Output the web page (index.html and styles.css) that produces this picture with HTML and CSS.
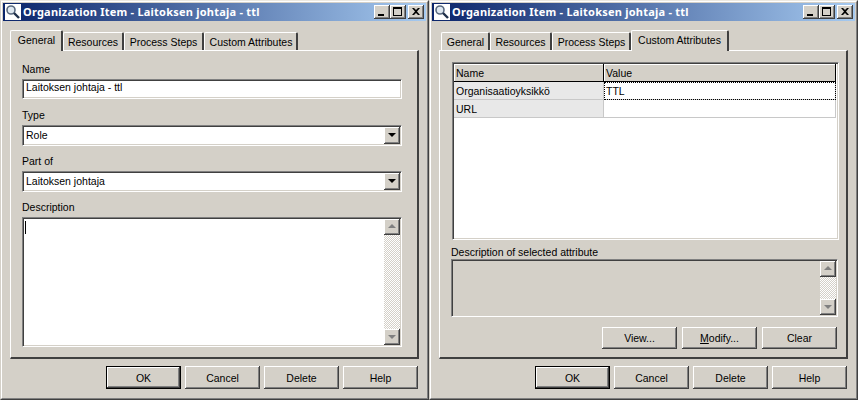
FILE: index.html
```html
<!DOCTYPE html>
<html lang="en">
<head>
<meta charset="utf-8">
<title>Organization Item</title>
<link rel="stylesheet" href="styles.css">
</head>
<body>
<svg class="defs" width="0" height="0" aria-hidden="true">
  <symbol id="mag" viewBox="0 0 16 16">
    <rect width="16" height="16" fill="#fff"/>
    <circle cx="6" cy="6" r="4" fill="#dfe8f0" stroke="#5a6a80" stroke-width="1.6"/>
    <path d="M9 9l5 5" stroke="#20304a" stroke-width="2.4"/>
  </symbol>
  <symbol id="min" viewBox="0 0 16 14"><path d="M4 9h6v2H4z" fill="#000"/></symbol>
  <symbol id="max" viewBox="0 0 16 14"><path d="M3 2h9v9H3zM4 4v6h7V4z" fill="#000" fill-rule="evenodd"/></symbol>
  <symbol id="close" viewBox="0 0 16 14"><path d="M4 3h2l2 2 2-2h2L9 6.5 12 10h-2L8 8l-2 2H4l3-3.500z" fill="#000"/></symbol>
  <symbol id="down" viewBox="0 0 16 16"><path d="M4 6h8L8 10z"/></symbol>
  <symbol id="up" viewBox="0 0 16 16"><path d="M4 9h8L8 5z"/></symbol>
</svg>

<section class="window">
  <div class="inner">
    <header class="title">
      <svg class="icon"><use href="#mag"/></svg>
      <span class="title-text">Organization Item - Laitoksen johtaja - ttl</span>
      <span class="controls">
        <button class="ctl"><svg><use href="#min"/></svg></button>
        <button class="ctl"><svg><use href="#max"/></svg></button>
        <button class="ctl close"><svg><use href="#close"/></svg></button>
      </span>
    </header>
    <nav class="tabs">
      <span class="tab active t1">General</span>
      <span class="tab t2">Resources</span>
      <span class="tab t3">Process Steps</span>
      <span class="tab t4">Custom Attributes</span>
    </nav>
    <main class="panel general">
      <label class="label">Name</label>
      <div class="field text">Laitoksen johtaja - ttl</div>
      <label class="label">Type</label>
      <div class="field select"><span>Role</span><span class="drop"><svg><use href="#down"/></svg></span></div>
      <label class="label">Part of</label>
      <div class="field select"><span>Laitoksen johtaja</span><span class="drop"><svg><use href="#down"/></svg></span></div>
      <label class="label">Description</label>
      <div class="field memo">
        <span class="caret"></span>
        <div class="scroll">
          <span class="sbtn"><svg><use href="#up"/></svg></span>
          <span class="track"></span>
          <span class="sbtn"><svg><use href="#down"/></svg></span>
        </div>
      </div>
    </main>
    <footer class="actions">
      <button class="btn default">OK</button>
      <button class="btn">Cancel</button>
      <button class="btn">Delete</button>
      <button class="btn">Help</button>
    </footer>
  </div>
</section>

<section class="window">
  <div class="inner">
    <header class="title">
      <svg class="icon"><use href="#mag"/></svg>
      <span class="title-text">Organization Item - Laitoksen johtaja - ttl</span>
      <span class="controls">
        <button class="ctl"><svg><use href="#min"/></svg></button>
        <button class="ctl"><svg><use href="#max"/></svg></button>
        <button class="ctl close"><svg><use href="#close"/></svg></button>
      </span>
    </header>
    <nav class="tabs tabs-right">
      <span class="tab r1">General</span>
      <span class="tab r2">Resources</span>
      <span class="tab r3">Process Steps</span>
      <span class="tab active r4">Custom Attributes</span>
    </nav>
    <main class="panel attrs">
      <div class="grid">
        <div class="grid-row head"><span class="gh c1">Name</span><span class="gh c2">Value</span></div>
        <div class="grid-row"><span class="cell c1 key">Organisaatioyksikkö</span><span class="cell c2 focus">TTL</span></div>
        <div class="grid-row"><span class="cell c1 key">URL</span><span class="cell c2"></span></div>
      </div>
      <label class="label desc-label">Description of selected attribute</label>
      <div class="field note">
        <div class="scroll">
          <span class="sbtn"><svg><use href="#up"/></svg></span>
          <span class="track"></span>
          <span class="sbtn"><svg><use href="#down"/></svg></span>
        </div>
      </div>
      <div class="attr-actions">
        <button class="btn small">View...</button>
        <button class="btn small"><span><u>M</u>odify...</span></button>
        <button class="btn small">Clear</button>
      </div>
    </main>
    <footer class="actions">
      <button class="btn default">OK</button>
      <button class="btn">Cancel</button>
      <button class="btn">Delete</button>
      <button class="btn">Help</button>
    </footer>
  </div>
</section>
</body>
</html>
```
FILE: styles.css
```css
* { box-sizing: border-box; }
html, body { margin: 0; padding: 0; }
body {
  width: 858px;
  height: 400px;
  overflow: hidden;
  display: flex;
  background: #d4d0c8;
  color: #000;
  font: 10.5px/13px "Liberation Sans", Arial, sans-serif;
}
.defs { position: absolute; }
.window {
  width: 429px;
  height: 400px;
  flex: none;
  border-top: 1px solid #ece9e2;
  border-left: 1px solid #d4d0c8;
  border-right: 1px solid #404040;
  border-bottom: 1px solid #404040;
}
.inner {
  height: 100%;
  border-top: 1px solid #fff;
  border-left: 1px solid #fff;
  border-right: 1px solid #808080;
  border-bottom: 1px solid #808080;
  padding: 1px 0 0;
  display: flex;
  flex-direction: column;
}
.title {
  height: 18px;
  margin: 0 1px 0 1px;
  flex: none;
  display: flex;
  align-items: flex-start;
  background: linear-gradient(90deg, #0a246a, #a6caf0);
  color: #fff;
  font: bold 11px/18px "Noto Sans", "DejaVu Sans", sans-serif;
}
.icon { width: 16px; height: 16px; margin: 1px 2px 0 2px; flex: none; }
.title-text { white-space: nowrap; letter-spacing: .22px; }
.controls { margin-left: auto; display: flex; padding: 2px 2px 0 0; }
.ctl {
  width: 16px;
  height: 14px;
  padding: 0;
  border: 0;
  background: #d4d0c8;
  box-shadow: inset -1px -1px #404040, inset 1px 1px #fff, inset -2px -2px #808080;
  display: block;
}
.ctl svg { width: 16px; height: 14px; display: block; }
.close { margin-left: 2px; }

.tabs {
  height: 20px;
  margin: 9px 0 0 8px;
  flex: none;
  display: flex;
  align-items: flex-end;
  position: relative;
  z-index: 1;
}
.tab {
  height: 18px;
  line-height: 19px;
  text-align: center;
  white-space: nowrap;
  border-top: 1px solid #fff;
  border-left: 1px solid #fff;
  border-right: 2px solid #404040;
  border-top-left-radius: 2px;
  border-top-right-radius: 2px;
  background: #d4d0c8;
}
.tab.active { height: 21px; margin-bottom: -1px; line-height: 19px; }
.t1 { width: 53px; padding-left: 1px; }
.t2 { width: 61px; }
.t3 { width: 80px; }
.t4 { width: 94px; padding-left: 1px; }
.r1 { width: 49px; margin-left: 2px; padding-left: 1px; }
.r2 { width: 62px; }
.r3 { width: 79px; padding-left: 1px; }
.r4 { width: 98px; }

.panel {
  width: 409px;
  height: 309px;
  margin-left: 8px;
  flex: none;
  border-top: 1px solid #fff;
  border-left: 1px solid #fff;
  border-right: 2px solid #404040;
  border-bottom: 2px solid #404040;
  padding: 12px 0 0 11px;
  display: flex;
  flex-direction: column;
  align-items: flex-start;
}
.label { display: block; height: 16px; line-height: 13px; }
.field {
  width: 380px;
  flex: none;
  background: #fff;
  border-top: 1px solid #808080;
  border-left: 1px solid #808080;
  border-right: 1px solid #fff;
  border-bottom: 1px solid #fff;
  box-shadow: inset 1px 1px #404040, inset -1px -1px #d4d0c8;
}
.text, .select { height: 20px; margin-bottom: 10px; line-height: 15px; padding: 0 3px 0 3px; white-space: nowrap; }
.select { height: 21px; margin-bottom: 9px; display: flex; justify-content: space-between; padding: 1px 1px 0 3px; line-height: 16px; }
.drop {
  width: 16px;
  height: 17px;
  background: #d4d0c8;
  box-shadow: inset -1px -1px #404040, inset 1px 1px #fff, inset -2px -2px #808080;
  display: block;
}
.drop svg, .sbtn svg { width: 16px; height: 16px; display: block; }
.memo {
  height: 130px;
  position: relative;
  display: flex;
  justify-content: flex-end;
  padding: 1px 1px 1px 0;
}
.caret { position: absolute; left: 2px; top: 3px; width: 1px; height: 13px; background: #000; }
.scroll { width: 16px; height: 100%; display: flex; flex-direction: column; flex: none; }
.sbtn {
  height: 16px;
  flex: none;
  background: #d4d0c8;
  box-shadow: inset -1px -1px #404040, inset 1px 1px #fff, inset -2px -2px #808080;
  fill: #808080;
}
.track { flex: 1; background: repeating-conic-gradient(#fff 0 25%, #d4d0c8 0 50%) 0 0 / 2px 2px; }

.actions {
  display: flex;
  justify-content: flex-end;
  gap: 4px;
  width: 408px;
  margin: 7px 0 0 8px;
}
.btn {
  width: 75px;
  height: 23px;
  padding: 1px 0 0;
  border: 0;
  background: #d4d0c8;
  color: #000;
  font: inherit;
  box-shadow: inset -1px -1px #404040, inset 1px 1px #fff, inset -2px -2px #808080;
}
.btn.default {
  width: 75px;
  box-shadow: inset 0 0 0 1px #000, inset -2px -2px #404040, inset 2px 2px #fff, inset -3px -3px #808080;
}
.btn.small { height: 22px; padding: 0; }

.attrs { padding: 11px 0 0 11px; }
.grid {
  width: 387px;
  height: 178px;
  flex: none;
  background: #fff;
  border-top: 1px solid #808080;
  border-left: 1px solid #808080;
  border-right: 1px solid #fff;
  border-bottom: 1px solid #fff;
  box-shadow: inset 1px 1px #404040, inset -1px -1px #d4d0c8;
  padding: 1px 0 0 1px;
  margin-left: 1px;
}
.grid-row { display: flex; height: 18px; }
.head { height: 18px; }
.c1 { width: 150px; flex: none; }
.c2 { width: 232px; flex: none; }
.gh {
  background: #d4d0c8;
  line-height: 18px;
  padding-left: 2px;
  box-shadow: inset -1px -1px #000, inset 1px 1px #fff;
}
.cell {
  line-height: 18px;
  padding-left: 2px;
  border-right: 1px solid #c8c8c8;
  border-bottom: 1px solid #c8c8c8;
}
.key { background: #e8e8e8; }
.focus { outline: 1px dotted #000; outline-offset: -1px; }
.desc-label { margin-top: 5px; height: 14px; line-height: 15px; }
.note {
  width: 387px;
  height: 58px;
  background: #d4d0c8;
  display: flex;
  justify-content: flex-end;
  padding: 1px 1px 1px 0;
}
.attr-actions {
  display: flex;
  gap: 5px;
  width: 386px;
  justify-content: flex-end;
  margin-top: 10px;
}
```
